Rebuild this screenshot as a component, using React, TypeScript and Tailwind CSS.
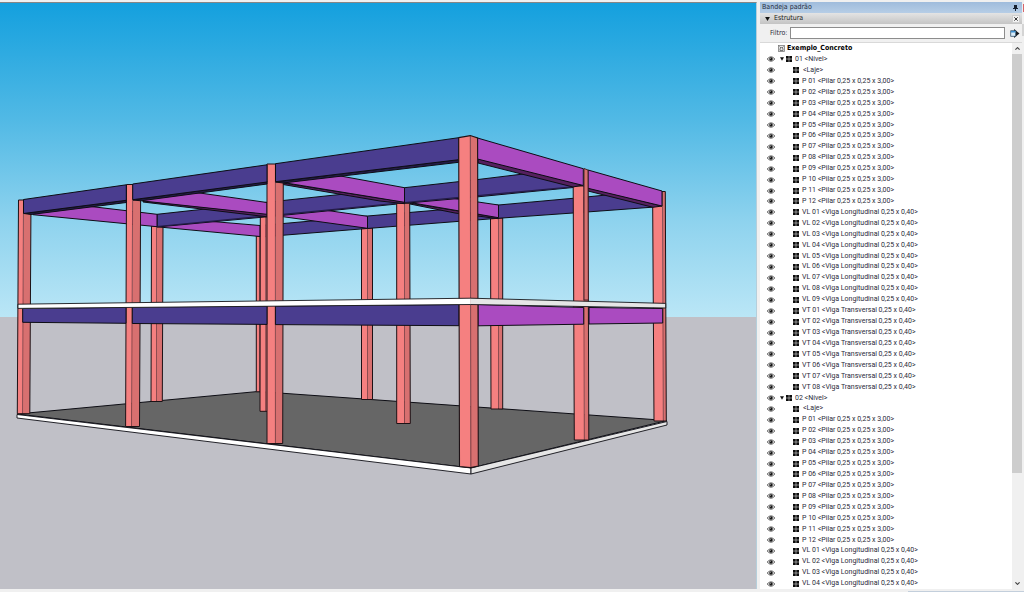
import React from "react";

const pad = (n: number) => String(n).padStart(2, "0");
const range = (n: number) => Array.from({ length: n }, (_, i) => i + 1);

const LEVELS = ["01", "02"];
const PARTS: string[] = [
  "<Laje>",
  ...range(12).map((n) => `P ${pad(n)} <Pilar 0,25 x 0,25 x 3,00>`),
  ...range(9).map((n) => `VL ${pad(n)} <Viga Longitudinal 0,25 x 0,40>`),
  ...range(8).map((n) => `VT ${pad(n)} <Viga Transversal 0,25 x 0,40>`),
];

type Row = { label: string; level: boolean };
const ROWS: Row[] = LEVELS.flatMap((l) => [
  { label: `${l} <Nível>`, level: true },
  ...PARTS.map((label) => ({ label, level: false })),
]).slice(0, 49);

const BLUE = "#4a3d8f";
const BLUE_DARK = "#241c48";
const PURPLE = "#aa4bc0";
const PURPLE_DARK = "#55205f";
const LIGHT = "#f58080";
const SHADE = "#d87070";

function Poly({ p, f, w = 1 }: { p: string; f: string; w?: number }) {
  return <polygon points={p} fill={f} stroke="#0d0d14" strokeWidth={w} strokeLinejoin="round" />;
}

type ColumnProps = { l: number; m: number; r: number; t: number; b: number; lb?: number; mb?: number; rb?: number };

function Column({ l, m, r, t, b, lb = l, mb = m, rb = r }: ColumnProps) {
  return (
    <g>
      <polygon points={`${l},${t} ${m},${t} ${mb},${b} ${lb},${b}`} fill={LIGHT} />
      <polygon points={`${m},${t} ${r},${t} ${rb},${b} ${mb},${b}`} fill={SHADE} />
      <line x1={m} y1={t} x2={mb} y2={b} stroke="#6b3238" strokeWidth={0.7} />
      <polygon points={`${l},${t} ${r},${t} ${rb},${b} ${lb},${b}`} fill="none" stroke="#1c1216" strokeWidth={1} />
    </g>
  );
}

function Model() {
  return (
    <svg viewBox="0 3 756 586" preserveAspectRatio="xMidYMid slice" className="block h-full w-full" role="img" aria-label="Exemplo_Concreto">
      <defs>
        <linearGradient id="sky" x1="0" y1="0" x2="0" y2="1">
          <stop offset="0" stopColor="#14a0de" />
          <stop offset="0.37" stopColor="#51b9e5" />
          <stop offset="0.7" stopColor="#8fd3ee" />
          <stop offset="1" stopColor="#bae6f6" />
        </linearGradient>
      </defs>
      <rect x="0" y="3" width="756" height="314" fill="url(#sky)" />
      <rect x="0" y="317" width="756" height="272" fill="#c0c0c7" />

      {/* ground slab */}
      <Poly p="17,414 258,391.5 667,420.5 471,468" f="#666666" />
      <Poly p="17,414.5 471,468 471,474 17,418" f="#ffffff" w={0.9} />
      <Poly p="471,468 667,421.5 667,425 471,474" f="#e6e6e6" w={0.9} />

      {/* rear columns */}
      <Column l={151.5} m={156.5} r={163} t={226} b={401.5} lb={151} rb={162.3} />
      <Column l={256.3} m={259.5} r={262} t={236} b={391.8} />
      <Column l={361.5} m={367.5} r={372.5} t={228} b={399.5} />
      <Column l={490.5} m={498.5} r={502.7} t={218} b={409} lb={491} rb={502.7} />

      {/* rear beams */}
      <Poly p="261,225.5 367.5,216 498.5,205 573,198.3 640,191.7 655,207 573,213 498,218.3 367,228.5 261,237" f={BLUE} />
      <Poly p="157,216.9 260,225.5 260,236.5 157,226.8" f={PURPLE} />
      <Poly p="283,204 367.5,216.3 367.5,228.3 283,216.7" f={PURPLE} />
      <Poly p="410,203 498,217.5 498,218.7 455,213 410,204" f={PURPLE_DARK} />
      <Poly p="410,192 498.5,205 498.5,217.7 410,202.5" f={PURPLE} />
      <Column l={260.3} m={265.7} r={268} t={216.5} b={411.3} lb={260} />

      {/* middle beams */}
      <Poly p="157,214.3 283,200.5 404.5,187.7 478,179.5 573,168 573,187.5 478,196.8 404.5,203.3 283,215.3 157,227" f={BLUE} />
      <path d="M157 226.5 283 214.3 404.5 202.5 573 186.8" stroke={BLUE_DARK} strokeWidth="1.2" fill="none" />
      <Column l={396.7} m={404.5} r={409.7} t={203.3} b={423.5} lb={396.7} rb={410.3} />
      <Poly p="40,200.5 157,214.3 157,226.7 33,214.7" f={PURPLE} />
      <Poly p="143,201 267,213.5 267,216.8 143,202" f={PURPLE_DARK} />
      <Poly p="150,186 267,202.5 267,214.3 143,201" f={PURPLE} />
      <Poly p="283,183 404.5,202 404.5,203.7 380,201 283,184.5" f={PURPLE_DARK} />
      <Poly p="283,165.5 404.5,187.7 404.5,202.3 283,182.5" f={PURPLE} />

      {/* front and right columns */}
      <Column l={18.5} m={23.5} r={31} t={200} b={413.7} lb={17.3} mb={22.5} rb={29.8} />
      <Column l={126.5} m={132.7} r={140.7} t={184.5} b={426.5} lb={125.6} mb={131.5} rb={139.5} />
      <Column l={267} m={275.4} r={283.3} t={164} b={443.5} rb={282.7} />
      <Column l={573.2} m={583.5} r={588} t={186} b={440} lb={574.3} mb={584.3} rb={588.8} />
      <Column l={652.6} m={662.5} r={665.3} t={191.5} b={421} lb={654} mb={663.3} rb={666.3} />

      {/* roof edge beams */}
      <Poly p="24,213.5 126.3,200.3 126.3,202.5 31,214.5" f={BLUE_DARK} />
      <Poly p="23.5,199.5 126.3,184.8 126.3,200.3 23.5,213.5" f={BLUE} />
      <Poly p="133,200 267,181.5 267,184 141,200.8" f={BLUE_DARK} />
      <Poly p="132.7,184 267,164.8 267,182 132.7,199.7" f={BLUE} />
      <Poly p="275.5,182 458.7,159.5 458.7,162.3 283,183" f={BLUE_DARK} />
      <Poly p="275.5,163.7 458.7,137.7 458.7,159.7 275.5,181.7" f={BLUE} />
      <Poly p="478,158.7 583.3,185 573,187 478,163" f={PURPLE_DARK} />
      <Poly p="477.5,138 583.3,168.7 583.3,185.5 477.5,159" f={PURPLE} />
      <Poly p="588,187.5 662,206 653,207.3 588,191" f={PURPLE_DARK} />
      <Poly p="588,170 662,191 662,206 588,188.3" f={PURPLE} />
      <polygon points="584,168.5 588,170 588.4,300 584,300" fill={SHADE} stroke="#3a1a20" strokeWidth="0.9" />

      {/* first floor beams */}
      <Poly p="22.7,308.5 126,307.3 126,323.3 22.7,322.3" f={BLUE} />
      <Poly p="132.3,307 267,306 267,324.4 132.3,323.5" f={BLUE} />
      <Poly p="275.4,306 459,304.5 459,325.7 275.4,324.6" f={BLUE} />
      <Poly p="478,304.5 583.7,307.5 583.7,324.2 478,325.8" f={PURPLE} />
      <Poly p="589,307.5 662.7,308.5 662.7,323 589,324" f={PURPLE} />

      {/* corner column */}
      <polygon points="458.7,137.6 470.3,135.6 470.7,467.6 459.5,466.5" fill={LIGHT} />
      <polygon points="470.3,135.6 477.6,138 478.3,466 470.7,467.6" fill={SHADE} />
      <line x1="470.3" y1="136" x2="470.9" y2="467" stroke="#6b3238" strokeWidth="0.8" />
      <polygon points="458.7,137.6 470.3,135.6 477.6,138 478.3,466 470.7,467.6 459.5,466.5" fill="none" stroke="#1c1216" strokeWidth="1.1" />

      {/* first floor slab */}
      <polygon points="470.7,298.2 665.7,303.4 665.7,308 470.7,304.5" fill="#e6e6e6" />
      <polygon points="18,304.2 470.7,298.2 470.7,304.5 18,308.4" fill="#ffffff" />
      <path d="M18 304.2 470.7 298.2 665.7 303.4V308L470.7 304.5 18 308.4z" fill="none" stroke="#15151a" strokeWidth="0.9" />
    </svg>
  );
}

function Eye() {
  return (
    <svg viewBox="0 0 16 12" className="h-[6px] w-2">
      <path d="M0.500 6C3 2.800 5.500 1.800 8 1.800s5 1 7.500 4.200C13 9.200 10.500 10.400 8 10.400S3 9.200 0.500 6Z" fill="#fff" stroke="#333" strokeWidth="1.500" />
      <circle cx="8" cy="6" r="3.600" fill="#151515" />
      <circle cx="6.800" cy="4.800" r="0.900" fill="#fff" />
    </svg>
  );
}

function Blocks() {
  return (
    <svg viewBox="0 0 6 6" className="h-[6px] w-[6px] shrink-0" fill="#0c0c0c">
      <rect x="0" y="0" width="2.750" height="2.750" />
      <rect x="3.250" y="0" width="2.750" height="2.750" />
      <rect x="0" y="3.250" width="2.750" height="2.750" />
      <rect x="3.250" y="3.250" width="2.750" height="2.750" />
    </svg>
  );
}

function Down({ className }: { className: string }) {
  return (
    <svg viewBox="0 0 6 5" className={className} fill="#111">
      <path d="M0 0h6L3 5z" />
    </svg>
  );
}

function Tree() {
  return (
    <ul className="flex h-full min-h-0 flex-1 flex-col overflow-hidden">
      <li className="flex h-[11px] items-center gap-[2px] pl-[18px] font-['DejaVu_Sans_Condensed','DejaVu_Sans',sans-serif] font-bold text-black">
        <svg viewBox="0 0 14 14" className="h-[7px] w-[7px]" fill="none" stroke="#777" strokeWidth="1.500">
          <rect x="1" y="1" width="12" height="12" fill="#e8e8e8" />
          <path d="M3 3l3 3M11 3L8 6M4 11V7l3-2 3 2v4z" stroke="#555" />
        </svg>
        Exemplo_Concreto
      </li>
      {ROWS.map((row, i) => (
        <li key={i} className="flex h-[11px] min-h-0 items-center whitespace-nowrap pl-[7px] font-['Roboto',sans-serif]">
          <button type="button" aria-label={`Visibilidade ${row.label}`} className="flex w-2 items-center">
            <Eye />
          </button>
          {row.level ? (
            <button type="button" aria-label={`Recolher ${row.label}`} className="ml-[5px] mr-[2px] flex w-1 items-center">
              <Down className="h-1 w-1" />
            </button>
          ) : (
            <span className="w-[18px]" />
          )}
          <Blocks />
          <span className={row.label === "<Laje>" ? "pl-1" : "pl-[3px]"}>{row.label}</span>
        </li>
      ))}
    </ul>
  );
}

export default function App() {
  return (
    <div className="flex h-screen flex-col overflow-hidden bg-[#f0f0f0] font-['DejaVu_Sans_Condensed','DejaVu_Sans',sans-serif] text-[7px] leading-[11px] text-[#2b2b3a]">
      <div className="flex min-h-0 flex-1 pt-[2px]">
        <main className="min-w-0 flex-1 border-r border-t border-r-[#b5cfdb] border-t-[#868686]">
          <Model />
        </main>
        <aside className="ml-[3px] flex w-[262px] flex-col">
          <header className="flex h-[11px] items-center justify-between bg-linear-to-b from-[#9fbcdc] to-[#b6cde6] pl-[2px] pr-1 text-[#1f2c40]">
            <h1>Bandeja padrão</h1>
            <button type="button" aria-label="Fixar">
              <svg viewBox="0 0 10 12" className="h-[6px] w-[5px]" fill="#16202e">
                <path d="M2 0h6v6h2v2H6v4H4V8H0V6h2z" />
              </svg>
            </button>
          </header>
          <div className="flex h-[11px] items-center justify-between bg-linear-to-b from-[#e4e4e4] to-[#c4c4c4] pl-[5px] pr-[2px] text-[#222]">
            <button type="button" className="flex items-center gap-1">
              <Down className="h-1 w-[5px]" />
              Estrutura
            </button>
            <button type="button" aria-label="Fechar" className="flex h-2 w-2 items-center justify-center border border-[#cfcfcf] bg-[#f2f2f2]">
              <svg viewBox="0 0 6 6" className="h-1 w-1" stroke="#333" strokeWidth="1.500">
                <path d="M0.500 0.500l5 5M5.500 0.500l-5 5" />
              </svg>
            </button>
          </div>
          <div className="flex h-[18px] items-center pl-[10px] pr-[2px]">
            <label htmlFor="filtro">Filtro:</label>
            <input id="filtro" className="ml-[2px] h-3 min-w-0 flex-1 border border-[#8c8c8c] bg-white px-1 outline-none" />
            <button type="button" aria-label="Detalhes" className="ml-[5px]">
              <svg viewBox="0 0 20 18" className="h-[9px] w-[10px]">
                <path d="M8 0l11 9L8 18z" fill="#15181c" />
                <rect x="1.500" y="3.500" width="10" height="11" fill="#d8ecfa" stroke="#27455e" strokeWidth="1.500" />
                <rect x="2" y="4" width="9" height="3" fill="#3a8fd0" />
              </svg>
            </button>
          </div>
          <div className="flex min-h-0 flex-1 border-t border-[#d9d9d9] bg-white">
            <Tree />
            <div className="flex w-[10px] flex-col items-center bg-[#f0f0f0]">
              <svg viewBox="0 0 8 5" className="my-1 h-[3px] w-[5px]" fill="none" stroke="#444" strokeWidth="1.800">
                <path d="M0.500 4.500L4 1l3.500 3.500" />
              </svg>
              <div className="flex w-full flex-1 flex-col">
                <div className="h-4/5 w-full bg-[#cdcdcd]" />
              </div>
              <svg viewBox="0 0 8 5" className="my-1 h-[3px] w-[5px]" fill="none" stroke="#444" strokeWidth="1.800">
                <path d="M0.500 0.500L4 4l3.500-3.500" />
              </svg>
            </div>
          </div>
        </aside>
        <div className="w-[2px] pt-[2px]">
          <div className="ml-px h-2 bg-[#d8656a]" />
          <div className="mt-3 h-3 bg-[#d4d4d4]" />
        </div>
      </div>
      <div className="flex h-[3px] flex-col items-end justify-end">
        <div className="h-px w-[116px] bg-[#c3cfdc]" />
      </div>
    </div>
  );
}
